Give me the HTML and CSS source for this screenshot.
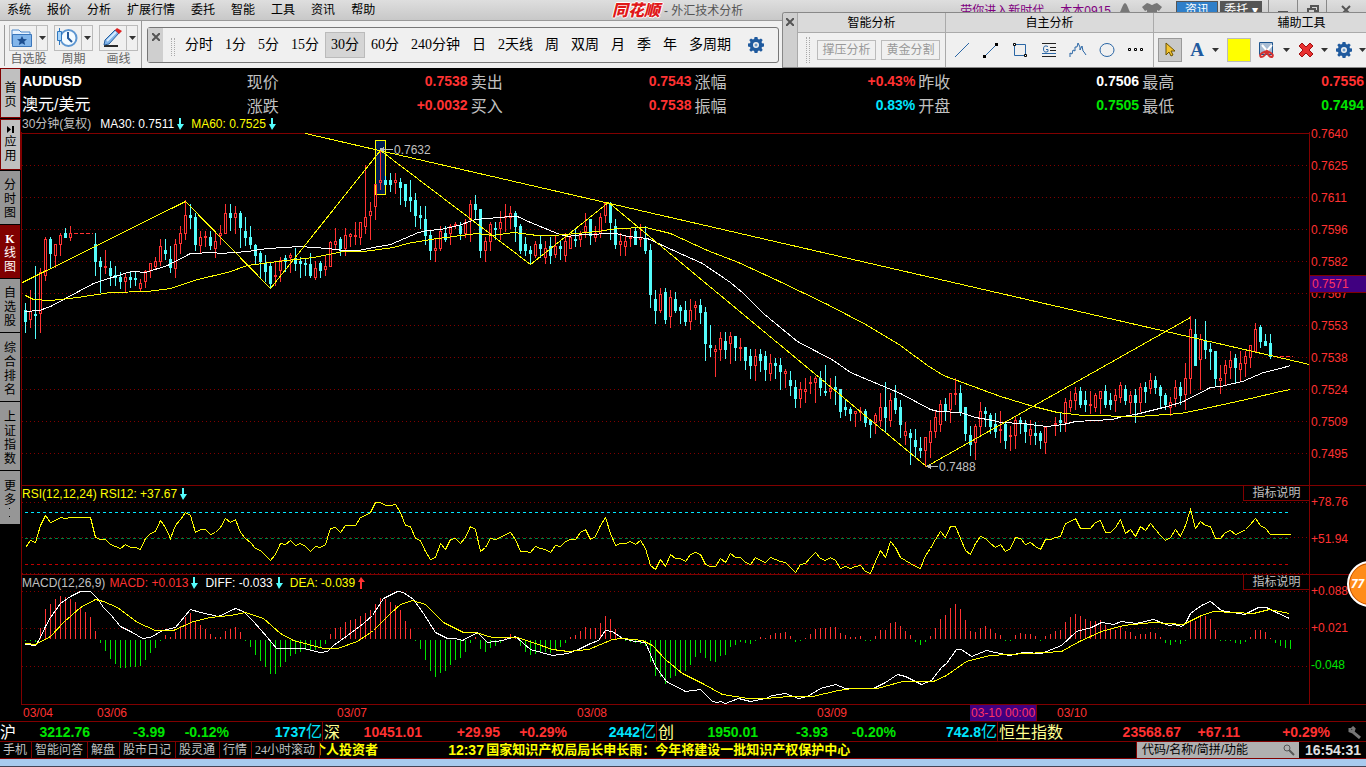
FILE: index.html
```html
<!DOCTYPE html>
<html lang="zh-CN">
<head>
<meta charset="utf-8">
<meta name="viewport" content="width=device-width, initial-scale=1">
<title>同花顺 - 外汇技术分析</title>
<link rel="stylesheet" href="styles.css">
</head>
<body>
<svg class="defs" aria-hidden="true">
  <symbol id="gear" viewBox="0 0 16 16"><path fill="#1f5a9e" fill-rule="evenodd" d="M6.6 0h2.8l.5 2.1 1.2.5L13 1.400 14.700 3.100 13.500 5l.5 1.200 2 .4v2.800l-2 .5-.5 1.200 1.200 1.900-1.700 1.700-1.900-1.200-1.200.5-.5 2H6.600l-.5-2-1.200-.5L3 14.700 1.300 13l1.200-1.900L2 9.900l-2-.5V6.600l2-.4L2.500 5 1.300 3.100 3 1.400l1.900 1.200 1.200-.5zM8 5a3 3 0 1 0 0 6 3 3 0 0 0 0-6z"/><circle cx="8" cy="8" r="1.500" fill="#6d9bcb"/></symbol>
  <symbol id="down" viewBox="0 0 7 12"><path fill="#54fcfc" d="M2 0h2v6h3L3 12 0 6h2z"/></symbol>
  <symbol id="up" viewBox="0 0 7 12"><path fill="#ff3232" d="M3 0l4 5H4v7H2V5H0z"/></symbol>
  <symbol id="caret" viewBox="0 0 7 4"><path fill="#333" d="M0 0h7L3.500 4z"/></symbol>
  <symbol id="cross" viewBox="0 0 8 8"><path stroke="#555" stroke-width="2" d="M0 0l8 8M8 0L0 8"/></symbol>
</svg>

<header class="titlebar">
  <nav class="menu">
    <a href="#">系统</a><a href="#">报价</a><a href="#">分析</a><a href="#">扩展行情</a><a href="#">委托</a><a href="#">智能</a><a href="#">工具</a><a href="#">资讯</a><a href="#">帮助</a>
  </nav>
  <h1 class="caption"><span class="logo">同花顺</span> - 外汇技术分析</h1>
  <div class="account">
    <a href="#">带你进入新时代</a><a href="#">本本0915</a>
    <svg width="12" height="14" viewBox="0 0 12 14"><path fill="#777" d="M6 0c3 2 3 6 5 9v2H1V9c2-3 2-7 5-9zM4 12h4l-2 2z"/></svg>
    <svg width="20" height="14" viewBox="0 0 20 14"><path fill="#777" d="M5 0l3 1q2 2 4 0l3-1 5 4-3 4-2-1v7H5V7L3 8 0 4z"/></svg>
  </div>
  <div class="tools"><button class="pill blue">资讯</button><button class="pill dark">委托 ▾</button></div>
  <div class="window-keys">
    <button aria-label="最小化"><svg width="10" height="10"><path fill="#555" d="M0 6h10v3H0z"/></svg></button>
    <button aria-label="还原"><svg width="12" height="10"><path fill="none" stroke="#555" stroke-width="2" d="M4 3V1h7v5H8M1 4h7v5H1z"/></svg></button>
    <button aria-label="关闭"><svg width="10" height="10"><path stroke="#555" stroke-width="2" d="M1 1l8 8M9 1L1 9"/></svg></button>
  </div>
</header>

<div class="toolbar">
  <div class="quick">
    <span class="handle"></span>
    <div class="quick-item"><button aria-label="自选股"><span><svg width="22" height="20" viewBox="0 0 22 20"><path fill="#e8f3ff" stroke="#4a86c8" d="M1 16V2h7l2 2h9v3"/><path fill="#82b5ea" stroke="#3a76bb" d="M1.500 6.500h19v12h-19z"/><path fill="#1c4e90" d="M11 8l1.500 3 3.500.3-2.700 2.200.9 3.500-3.200-1.800L7.800 17l.9-3.500L6 11.300l3.500-.3z"/></svg></span><i><svg width="7" height="4"><use href="#caret"/></svg></i></button>自选股</div>
    <div class="quick-item"><button aria-label="周期"><span><svg width="22" height="20" viewBox="0 0 22 20"><circle cx="12.500" cy="10" r="8" fill="#f5fbff" stroke="#5d96d1" stroke-width="2"/><path fill="none" stroke="#245a9c" stroke-width="2" d="M12 4v6l4 4"/><path stroke="#2f78c0" d="M3.500 0v17"/><path fill="#a9d4fa" stroke="#2f78c0" d="M1.500 3.500h4v9h-4z"/></svg></span><i><svg width="7" height="4"><use href="#caret"/></svg></i></button>周期</div>
    <div class="quick-item"><button aria-label="画线"><span><svg width="22" height="20" viewBox="0 0 22 20"><path stroke="#2a2a2a" stroke-width="2" d="M3 18h14"/><path fill="#7fb2e8" stroke="#28609f" d="M3 17l1-5L14 2l4 3L8 16z"/><path fill="#d22" d="M14 2l2-2 5 3-3 3z"/><path stroke="#d8ecff" stroke-width="2" d="M6 13L15 4"/></svg></span><i><svg width="7" height="4"><use href="#caret"/></svg></i></button>画线</div>
  </div>
  <div class="periods">
    <button class="close" aria-label="关闭周期栏"><svg width="8" height="8"><use href="#cross"/></svg></button>
    <span class="grip"></span>
    <nav>
      <button>分时</button><button>1分</button><button>5分</button><button>15分</button><button class="on">30分</button><button>60分</button><button>240分钟</button><button>日</button><button>2天线</button><button>周</button><button>双周</button><button>月</button><button>季</button><button>年</button><button>多周期</button>
    </nav>
    <button class="icon" aria-label="设置"><svg width="16" height="16"><use href="#gear"/></svg></button>
  </div>
</div>

<aside class="palette">
  <button class="close" aria-label="关闭画线栏"><svg width="8" height="8"><use href="#cross"/></svg></button>
  <section class="group smart">
    <h2>智能分析</h2>
    <div><span class="grip"></span><button class="outline">撑压分析</button><button class="outline">黄金分割</button></div>
  </section>
  <section class="group manual">
    <h2>自主分析</h2>
    <div>
      <button class="icon" aria-label="直线"><svg width="18" height="18"><path stroke="#2a66a5" d="M2 16L16 2"/></svg></button>
      <button class="icon" aria-label="线段"><svg width="18" height="18"><path stroke="#2a66a5" d="M3 15L15 3"/><path d="M1 14h3v3H1zM13 2h3v3h-3z"/></svg></button>
      <button class="icon" aria-label="矩形"><svg width="18" height="18"><path fill="none" stroke="#2a66a5" d="M3.500 3.500h11v11h-11z"/><path fill="#fff" stroke="#000" d="M2.500 2.500h2v2h-2zM13.500 13.500h2v2h-2z"/></svg></button>
      <button class="icon" aria-label="黄金线"><svg width="18" height="18"><path stroke="#222" d="M2 2.500h14M10 6.500h6M10 9.500h6M2 15.500h14"/><path stroke="#2a66a5" d="M2 12.500h14"/><path fill="none" stroke="#2a66a5" d="M8 5.500Q3.500 3.500 3.500 8T8 10.500v-2H6"/></svg></button>
      <button class="icon" aria-label="波浪"><svg width="18" height="18"><path fill="none" stroke="#2a66a5" d="M1 16v-4l2 1 1-4 2 1V6h2l1-4 2 4v3l2-4 1 5 1 1 2 3"/></svg></button>
      <button class="icon" aria-label="圆"><svg width="18" height="18"><ellipse cx="9" cy="9" rx="7" ry="6.500" fill="none" stroke="#2a66a5"/></svg></button>
      <button class="icon" aria-label="更多画线"><svg width="18" height="18"><path fill="#fff" stroke="#000" d="M1.500 7.500h2v2h-2zM7.500 7.500h2v2h-2zM13.500 7.500h2v2h-2z"/></svg></button>
    </div>
  </section>
  <section class="group helper">
    <h2>辅助工具</h2>
    <div>
      <button class="icon pressed" aria-label="选择"><svg width="14" height="16"><path fill="#f4c430" stroke="#6b5200" d="M3 1v12l3-3 2 4 2-1-2-4h4z"/></svg></button>
      <button class="icon letter" aria-label="文字">A</button><svg class="more" width="7" height="4"><use href="#caret"/></svg>
      <button class="swatch" aria-label="颜色"></button>
      <button class="icon" aria-label="剪切"><svg width="18" height="18"><path fill="#a9bdd4" stroke="#1f568f" d="M1.500 1.500h13v12h-13z"/><path stroke="#fff" stroke-width="2" d="M4 4l6 7M14 4l-6 7"/><path fill="none" stroke="#d43030" stroke-width="2" d="M9 10l-5 2q-3 2-1 4 4 0 6-6l4 2q3 2 1 4-4 0-5-6"/></svg></button><svg class="more" width="7" height="4"><use href="#caret"/></svg>
      <button class="icon" aria-label="删除"><svg width="16" height="16"><path fill="#e83030" stroke="#a01010" d="M4 1l4 4 4-4 3 3-4 4 4 4-3 3-4-4-4 4-3-3 4-4-4-4z"/></svg></button><svg class="more" width="7" height="4"><use href="#caret"/></svg>
      <button class="icon" aria-label="画线设置"><svg width="16" height="16"><use href="#gear"/></svg></button><svg class="more" width="7" height="4"><use href="#caret"/></svg>
    </div>
  </section>
</aside>

<div class="workspace">
  <nav class="tabs">
    <button class="light">首页</button>
    <button class="light app"><svg width="8" height="7"><path d="M0 0l4 3.500L0 7zM5 0h2v7H5z"/></svg>应用</button>
    <button>分时图</button>
    <button class="active"><b>K</b>线图</button>
    <button>自选股</button>
    <button>综合排名</button>
    <button>上证指数</button>
    <button>更多<svg width="8" height="12"><path d="M3 1h1v1H3zM3 9h1v1H3z"/></svg></button>
  </nav>
  <main>
    <section class="quote">
      <div class="code">AUDUSD</div>
      <dl><dt>现价</dt><dd class="red">0.7538</dd></dl><dl><dt>卖出</dt><dd class="red">0.7543</dd></dl><dl><dt>涨幅</dt><dd class="red">+0.43%</dd></dl><dl><dt>昨收</dt><dd>0.7506</dd></dl><dl><dt>最高</dt><dd class="red">0.7556</dd></dl>
      <div class="name">澳元/美元</div>
      <dl><dt>涨跌</dt><dd class="red">+0.0032</dd></dl><dl><dt>买入</dt><dd class="red">0.7538</dd></dl><dl><dt>振幅</dt><dd class="aqua">0.83%</dd></dl><dl><dt>开盘</dt><dd class="green">0.7505</dd></dl><dl><dt>最低</dt><dd class="green">0.7494</dd></dl>
    </section>

    <section class="panel price">
      <header><span class="muted">30分钟(复权)</span><span class="first">MA30: 0.7511</span><svg width="7" height="12"><use href="#down"/></svg><span class="yellow next">MA60: 0.7525</span><svg width="7" height="12"><use href="#down"/></svg></header>
      <svg class="plot" id="price" viewBox="22 132 1287 353" preserveAspectRatio="none"></svg>
      <div class="axis"><span>0.7640</span><span>0.7625</span><span>0.7611</span><span>0.7596</span><span>0.7582</span><span>0.7567</span><span>0.7553</span><span>0.7538</span><span>0.7524</span><span>0.7509</span><span>0.7495</span><mark>0.7571</mark></div>
    </section>

    <section class="panel rsi">
      <header><span class="yellow">RSI(12,12,24) RSI12: +37.67</span><svg width="7" height="12"><use href="#down"/></svg><button>指标说明</button></header>
      <svg class="plot" id="rsi" viewBox="22 502 1287 72" preserveAspectRatio="none"></svg>
      <div class="axis"><span>+78.76</span><span>+51.94</span></div>
    </section>

    <section class="panel macd">
      <header><span class="muted">MACD(12,26,9)</span><span class="red">MACD: +0.013</span><svg width="7" height="12"><use href="#down"/></svg><span class="next">DIFF: -0.033</span><svg width="7" height="12"><use href="#down"/></svg><span class="yellow next">DEA: -0.039</span><svg width="7" height="12"><use href="#up"/></svg><button>指标说明</button></header>
      <svg class="plot" id="macd" viewBox="22 591 1287 113" preserveAspectRatio="none"></svg>
      <div class="axis"><span>+0.088</span><span>+0.021</span><span class="green">-0.048</span></div>
    </section>

    <div class="dates"><span>03/04</span><span>03/06</span><span>03/07</span><span>03/08</span><span>03/09</span><mark>03-10 00:00</mark><span>03/10</span></div>
  </main>
</div>

<section class="indices">
  <div class="sh"><b>沪</b><span class="green">3212.76</span><span class="green">-3.99</span><span class="green">-0.12%</span><span class="aqua">1737<em>亿</em></span></div>
  <div class="sz"><b>深</b><span class="red">10451.01</span><span class="red">+29.95</span><span class="red">+0.29%</span><span class="aqua">2442<em>亿</em></span></div>
  <div class="cy"><b>创</b><span class="green">1950.01</span><span class="green">-3.93</span><span class="green">-0.20%</span><span class="aqua">742.8<em>亿</em></span></div>
  <div class="hs"><b>恒生指数</b><span class="red">23568.67</span><span class="red">+67.11</span><span class="red">+0.29%</span><button class="icon" aria-label="设置指数"><svg width="13" height="13"><path fill="none" stroke="#777" stroke-width="3" d="M2 2v3l3 1 7 6M5 6l1-3-2-2"/></svg></button></div>
</section>

<footer class="status">
  <nav><a href="#">手机</a><a href="#">智能问答</a><a href="#">解盘</a><a href="#">股市日记</a><a href="#">股灵通</a><a href="#">行情</a><a href="#">24小时滚动</a></nav>
  <div class="ticker"><span class="tail">个人投资者</span><span class="time">12:37</span><span>国家知识产权局局长申长雨：今年将建设一批知识产权保护中心</span></div>
  <label class="search"><input type="text" aria-label="搜索" placeholder="代码/名称/简拼/功能"><svg width="12" height="12"><circle cx="4" cy="4" r="3" fill="none" stroke="#555"/><path stroke="#555" stroke-width="2" d="M6 6l5 5"/></svg></label>
  <time>16:54:31</time>
</footer>
<div class="desktop"></div>
<button class="bubble">77</button>
<script src="chart.js"></script>
</body>
</html>
```
FILE: styles.css
```css
* { box-sizing: border-box; }
html, body { height: 100%; }
body {
  margin: 0;
  position: relative;
  display: flex;
  flex-direction: column;
  overflow: hidden;
  background: #000;
  color: #fff;
  font: 12px/16px "Liberation Sans", "Noto Sans CJK SC", sans-serif;
  white-space: nowrap;
}
button { margin: 0; padding: 0; border: 0; background: none; color: inherit; font: inherit; cursor: pointer; }
a { color: inherit; text-decoration: none; }
h1, h2, dl, dd { margin: 0; font: inherit; }
svg { flex: none; display: block; }
.defs { position: absolute; width: 0; height: 0; }
.red { color: #ff3232; }
.green { color: #00e600; }
.aqua { color: #00e6ff; }
.yellow { color: #ff0; }
.muted { color: #c0c0c0; }
.icon { display: flex; align-items: center; justify-content: center; }

/* title bar */
.titlebar { display: flex; flex: none; height: 21px; background: linear-gradient(#dedede, #c8c8c8); border-bottom: 1px solid #999; color: #000; line-height: 20px; }
.menu { display: flex; gap: 16px; padding-left: 7px; }
.caption { display: flex; gap: 4px; margin-left: auto; padding-right: 217px; padding-top: 1px; color: #555; }
.logo { font-size: 16px; font-weight: 900; font-style: italic; color: #e01818; text-shadow: 1px 0 #fff, -1px 0 #fff, 0 1px #fff, 0 -1px #fff; }
.account { display: flex; gap: 8px; align-items: flex-start; padding-top: 1px; color: #800080; }
.account a:first-child { margin-right: 8px; }
.account svg { margin-top: 2px; }
.account svg + svg { margin-left: 3px; }
.tools { display: flex; gap: 2px; margin-left: 14px; }
.pill { width: 42px; height: 18px; margin-top: 1px; color: #fff; line-height: 14px; border: 1px solid #555; }
.blue { background: #2f7fc9; }
.dark { background: #555; }
.window-keys { display: flex; margin-left: 6px; }
.window-keys button { width: 29px; padding: 3px 9px; border-left: 1px solid #888; }
.window-keys button:last-child { width: 40px; padding-left: 14px; }

/* toolbar */
.toolbar { display: flex; flex: none; align-items: center; height: 47px; background: #f0f0f0; color: #000; }
.quick { display: flex; gap: 6px; width: 142px; height: 47px; padding: 4px 3px 0 4px; border-right: 1px solid #999; color: #666; }
.handle { width: 2px; height: 41px; margin-right: -6px; border: 1px solid #999; border-width: 0 1px 1px 0; }
.quick-item { display: flex; flex-direction: column; align-items: center; width: 39px; }
.quick-item:nth-child(2) { margin-left: 4px; }
.quick-item button { display: flex; width: 39px; height: 26px; border: 1px solid #bbb; background: #f0f0f0; }
.quick-item button span { width: 26px; padding: 2px 1px; }
.quick-item button i { flex: 1; display: flex; align-items: center; justify-content: center; align-self: stretch; border-left: 1px solid #bbb; }
.periods { display: flex; align-items: center; height: 36px; margin-left: 5px; border: 1px solid #777; border-radius: 3px; padding-right: 14px; }
.close { display: flex; justify-content: center; width: 15px; height: 100%; padding-top: 5px; background: #cfcfcf; }
.grip { width: 4px; height: 18px; border: dotted #aaa; border-width: 0 1px; }
.periods .grip { margin: 4px 4px 0 8px; }
.periods nav { display: flex; }
.periods nav button { height: 26px; padding: 0 6px; font: 14px/26px "Liberation Serif", "Noto Sans CJK SC", sans-serif; }
.periods nav .on { background: #d5d5d5; box-shadow: inset 0 0 0 1px #bbb; }
.periods .icon { margin-left: 11px; }

/* drawing palette, floats over the toolbars */
.palette { position: absolute; top: 12px; right: 0; display: flex; width: 584px; height: 56px; overflow: hidden; background: #f0f0f0; color: #000; border: 1px solid #888; border-right: 0; border-radius: 3px 0 0 0; }
.palette .close { flex: none; border-right: 1px solid #aaa; }
.group { flex: none; border-right: 1px solid #aaa; }
.group h2 { height: 20px; line-height: 20px; text-align: center; background: #dadada; border-bottom: 1px solid #aaa; }
.group > div { display: flex; align-items: center; height: 34px; }
.smart { width: 148px; }
.smart .grip { height: 26px; margin: 0 7px 0 8px; }
.outline { width: 59px; height: 20px; margin-right: 5px; border: 1px solid #bbb; color: #999; line-height: 18px; }
.manual { width: 208px; }
.manual > div { gap: 11px; padding-left: 7px; }
.helper { width: 296px; }
.helper > div { gap: 7px; padding-left: 4px; }
.pressed { width: 24px; height: 24px; background: #c9c9c9; border: 1px solid #999; }
.letter { width: 16px; color: #1f5a9e; font: bold 19px/24px "Liberation Serif", serif; }
.swatch { width: 24px; height: 24px; background: #ff0; border: 1px solid #bbb; }
.more { margin-right: 1px; }

/* workspace */
.workspace { display: flex; flex: 1; min-height: 0; }
.tabs { display: flex; flex: none; flex-direction: column; gap: 1px; width: 21px; }
.tabs button { display: flex; flex-direction: column; align-items: center; justify-content: center; width: 20px; min-height: 53px; padding: 7px 4px 4px; background: #969696; color: #000; line-height: 14px; white-space: normal; word-break: break-all; }
.tabs .light { width: 21px; height: 50px; min-height: 0; background: #c0c0c0; border: 1px solid #800000; padding: 4px 3px 0; }
.tabs .app { height: 51px; padding-top: 0; }
.tabs .app svg { margin-bottom: 2px; }
.tabs .active { background: #800000; color: #fff; }
.tabs b { font-family: "Liberation Serif", serif; }
.tabs button:nth-child(6), .tabs button:nth-child(7) { min-height: 68px; }
main { flex: 1; min-width: 0; display: flex; flex-direction: column; }
.quote { display: grid; grid-template-columns: 225fr repeat(5, 224fr); padding: 1px 0 0 1px; font: bold 14px/24px "Liberation Sans", sans-serif; }
.quote dl { display: flex; justify-content: space-between; }
.quote dd { padding-right: 3px; }
.quote dl:nth-child(6n) dd { padding-right: 2px; }
.quote dt { color: #c0c0c0; font: 16px/24px "Noto Sans CJK SC", sans-serif; }
.name { font: 16px/24px "Liberation Sans", "Noto Sans CJK SC", sans-serif; }

.panel { display: grid; grid-template-columns: 1fr 57px; grid-template-rows: 16px auto; border-left: 1px solid #800000; }
.panel header { grid-area: 1 / 1; display: flex; align-items: center; line-height: 16px; }
.panel header svg { margin-left: 3px; }
.panel header button { align-self: flex-start; width: 66px; height: 15px; margin-left: auto; line-height: 14px; color: #c0c0c0; border: 1px solid #800000; border-width: 0 0 1px 1px; }
.panel .first { margin-left: 9px; }
.next { margin-left: 7px; }
.plot { grid-area: 2 / 1; width: 100%; overflow: hidden; }
.price { border-left: 0; margin-top: -1px; }
.price header { padding-left: 1px; }
.price .plot { height: 353px; border-left: 1px solid #800000; }
.rsi, .macd { border-top: 1px solid #800000; }
.rsi .plot { height: 72px; }
.macd { border-bottom: 1px solid #800000; }
.macd header .red { margin-left: 4px; }
.macd .plot { height: 113px; }
.axis { grid-area: 1 / 2 / 3 / 3; position: relative; display: flex; flex-direction: column; border-left: 1px solid #800000; color: #ff3232; line-height: 32px; padding-left: 1px; }
.axis .green { color: #00e600; }
.price .axis { grid-area: 2 / 2; }
.price .axis span:first-child { margin-top: -14px; }
.rsi .axis, .macd .axis { gap: 5px; }
.axis mark { position: absolute; left: -1px; right: 0; top: 143px; padding-left: 2px; line-height: 16px; background: #400080; color: #ff3264; border: 1px solid #800000; border-width: 1px 0 1px 1px; }
.dates { display: grid; grid-template-columns: 74fr 240fr 240fr 240fr 154fr 86fr 310fr; height: 16px; padding-left: 1px; line-height: 16px; color: #ff3232; }
.dates mark { justify-self: start; padding: 0 1px; background: #400080; color: #ff3264; border-right: 1px solid #800000; }
.dates span { padding-left: 1px; }

/* index bar and status bar */
.indices { display: grid; flex: none; grid-template-columns: 323fr 334fr 341fr 368fr; height: 21px; border-top: 1px solid #800000; border-bottom: 1px solid #800000; font: bold 14px/19px "Liberation Sans", "Noto Sans CJK SC", sans-serif; }
.indices > div { display: grid; align-items: center; text-align: right; border-right: 1px solid #800000; }
.indices > div:last-child { border: 0; }
.indices b { font-size: 16px; font-weight: 400; text-align: left; color: #ffff90; padding-left: 1px; }
.indices .sh b { color: #fff; padding: 0; }
.indices em { font-size: 16px; font-style: normal; font-weight: 400; }
.sh { grid-template-columns: 20fr 70fr 75fr 64fr 93fr; }
.sz { grid-template-columns: 20fr 79fr 78fr 67fr 89fr; }
.cy { grid-template-columns: 20fr 81fr 70fr 68fr 101fr; }
.hs { grid-template-columns: 66fr 117fr 59fr 90fr 36fr; }
.hs .icon { padding-left: 12px; }
.status { display: flex; flex: none; height: 17px; border-bottom: 1px solid #800000; color: #c0c0c0; line-height: 16px; }
.status nav { display: flex; font-family: "Liberation Serif", "Noto Sans CJK SC", sans-serif; }
.status nav a { padding: 0 4px 0 3px; border-right: 1px solid #800000; }
.ticker { display: flex; flex: 1; min-width: 0; overflow: hidden; color: #ff0; font-size: 13px; font-weight: bold; }
.ticker .tail { margin: 0 70px 0 -7px; }
.time { width: 38px; font-size: 14px; }
.search { display: flex; align-items: center; width: 163px; background: #b0b0b0; padding: 0 4px 0 5px; border-left: 1px solid #800000; }
.search input { flex: 1; min-width: 0; padding: 0; border: 0; outline: 0; background: none; font: inherit; }
.search input::placeholder { color: #000; opacity: 1; }
.status time { width: 67px; padding-left: 6px; font: bold 14px/16px "Liberation Sans", sans-serif; color: #e0e0e0; }
.desktop { flex: none; height: 8px; background: #a9cbee; border-bottom: 1px solid #445; }
.bubble { position: absolute; top: 561px; right: -27px; width: 46px; height: 46px; padding-left: 2px; border: 2px solid #fff; border-radius: 50%; background: #ff8c1a; color: #fff; font: italic bold 12px/42px "Open Sans", sans-serif; text-align: left; box-shadow: inset 0 0 0 1px #c05000; }

/* chart marks */
.plot * { shape-rendering: crispEdges; }
.grid { stroke: #800000; stroke-dasharray: 1 3; }
.edge { stroke: #800000; }
.line { fill: none; stroke-width: 1; }
.tag { fill: #c0c0c0; font: 12px "Liberation Sans", sans-serif; }
```
FILE: chart.js
```js
const NS = 'http://www.w3.org/2000/svg';
const FIRST = 25;
const STEP = 5;

function add(id, tag, attrs, text) {
  const el = document.createElementNS(NS, tag);
  for (const key in attrs) el.setAttribute(key, attrs[key]);
  if (text) el.textContent = text;
  document.getElementById(id).appendChild(el);
}
const block = (x, top, w, bottom) => `M${x} ${top}h${w}V${bottom}h${-w}z`;
const level = (id, y, cls) => add(id, 'path', { class: cls, d: `M22 ${y + 0.5}H1309` });
function dashes(id, y, color) {
  add(id, 'path', { stroke: color, 'stroke-dasharray': '3 3', d: `M25 ${y + 0.5}H1290` });
}
function curve(id, color, text) {
  const points = text.trim().split(/\s+/).map(p => p.split(',').map(v => +v + 0.5).join(','));
  add(id, 'polyline', { class: 'line', stroke: color, points: points.join(' ') });
}

/* bar: direction, high, body top, body bottom, low; "-" leaves the slot empty */
const bars = `
d303,310,321,332 u290,311,319,327 d266,314,315,338 u268,272,313,332 u237,239,275,280 d237,239,253,268 u244,244,255,267 u233,235,244,255 d228,233,237,237 u226,233,237,240
- - - - d233,244,261,275 d257,261,266,292 u250,266,267,273 d261,268,275,285 d266,275,277,285 d272,277,281,288
u273,277,281,292 d271,277,279,287 d272,278,279,285 u279,283,288,291 u270,271,281,287 u263,263,270,277 u257,261,266,269 u239,246,261,265 d239,250,253,259 d246,259,267,272
u239,244,268,277 u226,233,243,253 u200,215,233,239 d204,215,217,228 d213,217,244,250 u231,237,245,252 u231,236,237,246 d231,237,245,249 u231,241,248,257 u225,233,235,244
u204,213,233,233 d204,213,217,230 u206,213,217,233 d211,213,227,247 d217,231,237,245 d226,237,244,248 d244,245,255,263 d251,253,261,277 d255,263,271,281 d263,266,283,288
u261,275,276,285 u257,260,270,281 d255,258,261,271 u253,255,257,272 d248,258,263,270 d257,261,263,277 d259,263,264,275 d253,264,275,277 u261,268,277,279 d261,263,270,277
u255,266,269,275 u241,242,266,266 u228,241,244,248 d237,239,248,255 u228,235,248,255 u233,234,236,246 u222,235,236,244 u222,222,237,244 u165,217,226,233 u202,211,215,239
u184,184,206,219 u150,180,182,189 d176,180,184,184 d173,180,184,191 u173,180,182,193 d178,182,187,204 d184,184,200,206 d180,197,200,211 d193,200,215,226 d206,215,217,228
d206,219,235,244 d231,235,250,259 u239,248,250,261 u226,231,248,250 d226,233,239,241 u224,226,233,244 u222,224,225,228 d222,226,233,239 u219,222,233,237 u200,204,219,241
d195,204,209,218 d209,209,250,257 u237,241,250,261 u222,224,241,250 d222,228,229,239 u211,222,228,239 u204,216,217,231 u206,213,217,228 d211,213,226,241 d224,226,250,253
d237,244,250,255 d246,250,253,263 u241,244,255,257 d235,244,248,257 u241,248,257,263 d237,246,255,263 u235,246,254,257 d240,246,248,259 u233,241,255,261 u235,237,248,248
d228,239,240,246 u231,235,239,246 u213,226,231,237 d219,219,235,244 u226,233,237,241 u213,217,233,237 u202,203,215,222 d202,203,222,239 d219,226,244,248 u233,241,244,255
u235,241,246,255 u228,237,238,246 d227,231,244,244 u224,237,239,246 d226,239,250,253 d244,250,294,307 d290,299,310,323 u288,294,310,312 d288,292,319,323 u290,297,316,327
d292,299,310,312 d305,307,310,323 d301,310,321,325 u299,310,321,329 u301,305,307,319 d299,305,312,323 d307,312,343,360 d325,345,347,356 u345,349,351,376 u332,338,349,360
d332,341,349,358 u332,336,343,363 d336,336,347,360 u338,347,348,360 d347,347,360,369 d349,356,365,378 u349,356,365,380 d349,354,360,371 d351,356,369,380 u354,363,373,380
d358,363,365,378 d358,365,371,389 u369,371,373,387 d371,380,385,395 d380,387,398,407 u382,389,398,407 u378,389,391,402 u376,382,383,393 u376,378,382,402 d371,378,387,395
d365,391,392,395 u378,388,391,398 d376,387,389,404 d389,389,411,417 d399,407,409,415 d407,409,413,420 u411,411,413,426 u407,411,412,420 d409,411,422,426 d420,420,424,437
u413,415,422,433 u393,407,420,426 d382,407,417,431 u393,400,420,426 d385,398,409,413 d400,407,424,437 u422,431,435,444 d429,433,437,464 d429,440,446,457 d437,448,450,457
u437,437,450,466 u420,431,442,457 u410,417,431,437 u400,404,424,431 d398,404,411,420 u393,393,409,422 u378,393,394,404 d385,393,411,415 d407,407,433,440 d426,435,444,455
u424,426,442,459 u402,411,426,435 d407,411,413,426 d413,415,426,433 d413,424,431,437 u411,429,430,442 d421,424,440,448 u426,435,436,450 u417,420,435,448 d417,420,422,433
d420,424,431,442 u420,429,435,444 d422,433,435,444 d431,433,440,448 u427,427,442,453 - u417,423,424,435 d413,420,422,431 u398,402,422,431 u391,400,407,411
u387,393,400,409 d387,391,404,407 d391,400,404,411 u391,404,405,413 u393,395,407,411 u391,391,398,413 d385,391,404,407 d393,400,404,409 u389,395,400,411 u382,385,397,402
d385,389,400,404 u391,395,402,413 d389,395,402,422 u383,387,402,411 d382,387,391,402 u373,380,388,393 d376,380,387,393 d385,387,395,407 d393,395,404,409 u397,402,407,415
u380,387,398,406 d382,387,395,404 u363,378,394,409 u316,329,378,393 d319,334,365,365 u334,339,359,389 d321,341,349,358 d343,349,351,369 d351,351,378,386 u365,378,380,393
u360,365,373,385 u351,360,367,378 d354,358,367,382 u351,363,369,380 u351,356,363,376 u345,345,357,367 u323,329,351,351 d325,327,341,347 d334,341,345,345 d334,343,356,358`;

level('price', 133, 'edge');
for (let y = 165; y < 470; y += 32) level('price', y, 'grid');
add('price', 'rect', { x: 375.5, y: 140.5, width: 10, height: 54, fill: '#001c50', stroke: '#ff0' });

let hollow = '', falling = '', rising = '';
bars.trim().split(/\s+/).forEach((bar, i) => {
  if (bar === '-') return;
  const x = FIRST + STEP * i;
  const [high, top, bottom, low] = bar.slice(1).split(',').map(Number);
  if (bar[0] === 'd') {
    falling += block(x, high, 1, low + 1) + block(x - 1, top, 3, bottom + 1);
  } else {
    rising += block(x, high, 1, top) + block(x, bottom, 1, low + 1);
    hollow += `M${x - 0.5} ${top + 0.5}h2V${bottom + 0.5}h-2z`;
  }
});
add('price', 'path', { fill: '#54fcfc', d: falling });
add('price', 'path', { fill: '#ff3232', d: rising });
add('price', 'path', { fill: 'none', stroke: '#ff3232', d: hollow });
add('price', 'path', { stroke: '#ff3232', 'stroke-dasharray': '4 2', d: 'M74 233.5H93M1274 356.5H1293' });

curve('price', '#fff', `25,311 39,310 50,306 63,299 93,283 127,272 133,271 145,272 167,265 190,253 213,252 220,253 247,251 267,248 300,246 327,248 343,250 358,250 373,247 390,244 418,232 427,230 440,229 458,225 475,219 510,216 517,216 530,222 557,233 567,236 583,234 615,233 628,236 647,238 673,250 702,263 730,282 743,293 763,313 775,323 797,341 833,360 850,372 900,393 930,409 938,411 960,412 975,417 993,420 1000,422 1023,423 1037,425 1047,426 1063,424 1075,421 1112,419 1122,416 1135,414 1167,406 1183,401 1210,387 1220,386 1242,381 1263,372 1280,368 1290,365`);
curve('price', '#ff0', `25,295 33,299 50,300 77,297 110,292 147,291 170,288 197,279 227,272 247,265 277,261 313,257 343,251 363,251 393,247 407,243 430,239 453,236 477,233 492,235 513,232 537,235 553,235 577,233 597,231 617,228 645,227 658,230 670,233 707,250 738,262 777,280 827,304 867,325 900,345 927,365 943,375 1000,396 1033,406 1057,412 1083,415 1137,416 1180,413 1200,409 1223,404 1250,398 1280,391 1290,389`);
curve('price', '#ff0', '22,282 185,201 270,288 380,150 530,264 608,202 926,466 1190,317');
curve('price', '#ff0', '305,133 1309,364');
add('price', 'path', { fill: '#c0c0c0', d: 'M379 149l5-2v2h9v1h-9v2zM926 466l5-2v2h7v1h-7v2z' });
add('price', 'text', { class: 'tag', x: 394, y: 154 }, '0.7632');
add('price', 'text', { class: 'tag', x: 939, y: 471 }, '0.7488');

/* values are in thirds of a pixel from the 480 line */
const rsi = `200 180 185 135 106 127 121 112 114 112 112 112 112 112 170 177 178 192 197 205 193 200 202 208 173 158 153 121 141 173 135 118 97 104 156 148 148 163 156 142 115 125 118 155 173 185 203 211 226 241 222 190 193 181 196 190 197 214 199 202 193 143 142 157 136 136 136 112 106 95 67 67 76 76 73 95 136 137 174 179 214 238 232 188 206 178
175 190 170 139 148 214 200 173 178 170 161 157 178 214 214 217 199 205 206 216 196 199 184 176 178 157 148 178 168 136 112 158 196 190 190 182 193 181 205 256 268 238 259 223 235 235 244 223 217 223 253 257 259 235 247 220 232 232 247 252 232 240 247 232 237 244 245 262 275 251 249 230 217 233 241 232 239 265 259 265 257 256 274 278 243 211 232 184 202 230 239
248 257 263 225 205 178 154 170 139 139 175 209 223 190 169 173 190 200 193 212 203 172 174 193 187 199 208 178 178 170 169 130 122 115 145 145 145 127 119 157 157 142 118 160 148 169 139 151 130 148 166 181 172 148 169 136 86 145 124 135 139 175 175 157 151 163 157 148 133 115 136 145 163 163 163 163 163`.split(/\s+/);
[502, 537, 573].forEach(y => level('rsi', y, 'grid'));
dashes('rsi', 512, '#00e6ff');
dashes('rsi', 538, '#008040');
dashes('rsi', 564, '#c00000');
curve('rsi', '#ff0', rsi.map((v, i) => `${FIRST + STEP * i},${480 + Math.round(v / 3)}`).join(' '));

const macd = `483 484 486 444 387 372 357 348 351 356 366 381 396 411 453 489 513 537 552 564 564 560 560 558 540 519 504 480 465 471 456 438 411 400 423 435 447 462 471 471 453 447 441 456 482 501 525 543 560 582 582 560 546 528 523 516 510 513 510 504 492 462 444 441 426 420 417 408 400 391 372 354 358 366 375 391 423 447 482 507 540 573 591 579 574 555
540 534 516 489 471 507 516 504 498 489 472 463 468 498 516 525 522 519 516 519 511 501 489 471 465 453 441 444 444 429 408 417 447 468 483 486 489 492 498 546 588 591 611 594 588 576 573 555 531 519 534 543 546 528 525 501 495 486 489 492 482 471 474 465 459 459 456 468 486 483 474 462 447 444 444 441 441 459 465 471 471 468 482 482 468 450 450 430 426 438 453
465 486 494 486 468 444 417 405 384 372 387 420 453 456 444 438 447 459 465 482 483 465 459 462 462 468 482 468 462 453 450 426 411 402 408 417 423 423 420 435 444 450 441 453 456 468 462 462 456 459 471 489 495 486 492 482 420 423 408 408 417 450 482 483 483 489 492 486 471 450 450 456 474 489 498 504 507`.split(/\s+/);
[591, 628, 666].forEach(y => level('macd', y, 'grid'));
let above = '', below = '';
macd.forEach((v, i) => {
  const y = 480 + Math.round(v / 3);
  const x = FIRST + STEP * i;
  if (v < 479) above += block(x, y, 1, 639);
  else below += block(x, 640, 1, Math.max(y, 641));
});
add('macd', 'path', { fill: '#ff3232', d: above });
add('macd', 'path', { fill: '#00e600', d: below });
curve('macd', '#fff', `25,644 35,645 40,637 45,626 50,617 60,603 70,596 80,591 90,591 97,598 103,607 110,614 120,626 132,632 142,638 150,637 162,630 175,627 190,609 200,612 218,616 235,608 243,611 253,621 267,637 276,648 303,648 320,652 327,651 333,645 347,635 363,623 372,615 383,598 397,591 403,592 413,599 423,613 435,632 447,638 455,638 462,640 477,632 487,642 502,640 515,636 530,649 552,655 567,653 578,649 590,643 598,640 605,630 612,631 622,638 635,641 645,642 655,666 666,681 685,691 700,689 712,701 717,702 720,701 725,703 738,698 750,701 765,698 772,695 785,693 798,698 807,696 820,688 835,684 845,688 873,688 885,682 897,674 905,676 921,684 931,680 941,667 946,663 956,649 961,649 971,656 986,650 1009,655 1023,652 1041,653 1061,645 1076,631 1091,627 1101,622 1113,624 1121,621 1136,623 1153,619 1169,625 1174,624 1181,626 1185,623 1190,613 1201,605 1210,601 1221,610 1244,614 1258,607 1266,607 1278,613 1289,618`);
curve('macd', '#ff0', `25,643 35,644 50,636 63,622 80,607 95,599 103,601 117,607 137,622 155,630 173,630 193,621 210,617 230,615 245,612 263,618 280,633 293,640 323,648 337,648 357,641 373,630 390,613 400,604 412,600 425,604 443,622 463,632 475,632 492,637 517,637 535,643 552,649 568,651 588,649 612,639 622,638 642,640 652,645 665,659 682,673 702,683 722,694 748,698 765,698 788,696 812,696 838,690 852,688 877,688 902,681 933,681 946,675 966,661 989,655 1009,654 1061,651 1079,641 1101,631 1123,625 1153,622 1183,624 1201,615 1213,611 1253,613 1269,609 1289,613`);
```
